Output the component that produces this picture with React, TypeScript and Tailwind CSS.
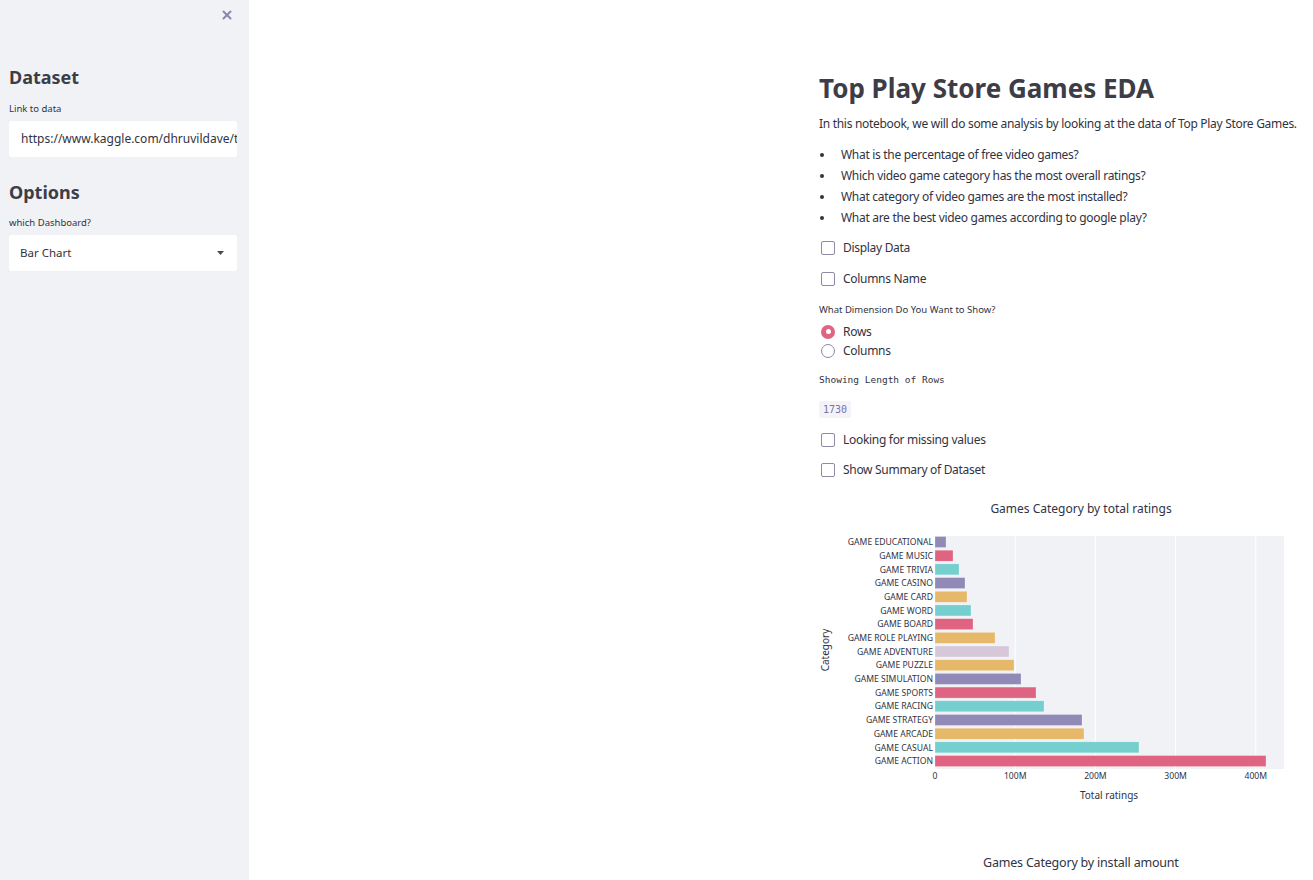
import { X } from "lucide-react";

const font = { fontFamily: '"Noto Sans", "Liberation Sans", sans-serif' };
const mono = { fontFamily: '"DejaVu Sans Mono", "Liberation Mono", monospace' };

const bars = [
  { name: "GAME EDUCATIONAL", len: 11, color: "#918ab7" },
  { name: "GAME MUSIC", len: 18, color: "#df6482" },
  { name: "GAME TRIVIA", len: 24, color: "#75cfcf" },
  { name: "GAME CASINO", len: 30, color: "#918ab7" },
  { name: "GAME CARD", len: 32, color: "#e6b96a" },
  { name: "GAME WORD", len: 36, color: "#75cfcf" },
  { name: "GAME BOARD", len: 38, color: "#df6482" },
  { name: "GAME ROLE PLAYING", len: 60, color: "#e6b96a" },
  { name: "GAME ADVENTURE", len: 74, color: "#d6c7d9" },
  { name: "GAME PUZZLE", len: 79, color: "#e6b96a" },
  { name: "GAME SIMULATION", len: 86, color: "#918ab7" },
  { name: "GAME SPORTS", len: 101, color: "#df6482" },
  { name: "GAME RACING", len: 109, color: "#75cfcf" },
  { name: "GAME STRATEGY", len: 147, color: "#918ab7" },
  { name: "GAME ARCADE", len: 149, color: "#e6b96a" },
  { name: "GAME CASUAL", len: 204, color: "#75cfcf" },
  { name: "GAME ACTION", len: 331, color: "#df6482" },
];

const questions = [
  "What is the percentage of free video games?",
  "Which video game category has the most overall ratings?",
  "What category of video games are the most installed?",
  "What are the best video games according to google play?",
];

function Checkbox({ label }: { label: string }) {
  return (
    <div className="flex items-center h-[20px] gap-[8px] text-[12px] tracking-[-0.3px] text-[#31333f]">
      <span className="ml-[2px] w-[14px] h-[14px] rounded-[2px] border border-[#8e8aa8] bg-white" />
      <span>{label}</span>
    </div>
  );
}

function Radio({ label, checked }: { label: string; checked?: boolean }) {
  return (
    <div className="flex items-center h-[19px] gap-[8px] text-[12px] tracking-[-0.3px] text-[#31333f]">
      {checked ? (
        <span className="ml-[2px] w-[14px] h-[14px] rounded-full bg-[#df6482] flex items-center justify-center">
          <span className="w-[5px] h-[5px] rounded-full bg-white" />
        </span>
      ) : (
        <span className="ml-[2px] w-[14px] h-[14px] rounded-full border border-[#8e8aa8] bg-white" />
      )}
      <span>{label}</span>
    </div>
  );
}

function RatingsChart() {
  const left = 116;
  const top = 46;
  const right = 465;
  const bottom = 279;
  const step = 13.69;
  const scale = 0.802;
  const ticks = [0, 100, 200, 300, 400];
  return (
    <svg width="494" height="320" className="block" style={font}>
      <text x="262" y="23" textAnchor="middle" fontSize="12" fill="#31333f">
        Games Category by total ratings
      </text>
      <rect x={left} y={top} width={right - left} height={bottom - top} fill="#f0f2f6" />
      {ticks.slice(1).map((t) => (
        <line key={t} x1={left + t * scale} x2={left + t * scale} y1={top} y2={bottom} stroke="#ffffff" strokeWidth="1" />
      ))}
      {bars.map((b, i) => {
        const cy = 52 + i * step;
        return (
          <g key={b.name}>
            <text x={left - 2} y={cy + 3.2} textAnchor="end" fontSize="8.6" fill="#31333f">
              {b.name}
            </text>
            <rect x={left} y={cy - 5.5} width={b.len} height="11" fill={b.color} stroke="#ffffff" strokeOpacity="0.5" strokeWidth="0.5" />
          </g>
        );
      })}
      {ticks.map((t) => (
        <text key={t} x={left + t * scale} y="289" textAnchor="middle" fontSize="8.6" fill="#31333f">
          {t === 0 ? "0" : `${t}M`}
        </text>
      ))}
      <text x="290" y="309" textAnchor="middle" fontSize="10" fill="#31333f">
        Total ratings
      </text>
      <text transform="translate(10 160) rotate(-90)" textAnchor="middle" fontSize="10" fill="#31333f">
        Category
      </text>
    </svg>
  );
}

export default function App() {
  return (
    <div className="flex h-[880px] w-[1313px] overflow-hidden bg-white" style={font}>
      <aside className="w-[249px] shrink-0 bg-[#f0f2f6] pl-[9px] pr-[12px]">
        <div className="flex justify-end pt-[8px] pr-[3px]">
          <X size={14} strokeWidth={3.5} className="text-[#8f86b0]" />
        </div>
        <h2 className="mt-[43px] text-[18px] font-bold leading-[24px] text-[#3d3d48]">Dataset</h2>
        <div className="mt-[14px] text-[9.5px] leading-[12px] text-[#31333f]">Link to data</div>
        <div className="mt-[6px] h-[36px] bg-white rounded-[2px] flex items-center pl-[12px] overflow-hidden whitespace-nowrap text-[12px] text-[#31333f]">
          https://www.kaggle.com/dhruvildave/t
        </div>
        <h2 className="mt-[23px] text-[18px] font-bold leading-[24px] text-[#3d3d48]">Options</h2>
        <div className="mt-[13px] text-[9.5px] leading-[12px] text-[#31333f]">which Dashboard?</div>
        <div className="mt-[6px] h-[36px] bg-white rounded-[2px] flex items-center justify-between pl-[11px] pr-[13px] text-[11.5px] text-[#31333f]">
          <span>Bar Chart</span>
          <svg width="7" height="4" viewBox="0 0 7 4">
            <path d="M0 0h7L3.5 4z" fill="#4a4a5a" />
          </svg>
        </div>
      </aside>
      <main className="flex-1 pl-[570px] pt-[71px] text-[#31333f]">
        <div className="w-[494px]">
          <h1 className="text-[26px] font-bold leading-[34px] text-[#3d3d48] whitespace-nowrap">
            Top Play Store Games EDA
          </h1>
          <p className="mt-[10px] text-[12px] leading-[18px] whitespace-nowrap tracking-[-0.3px]">
            In this notebook, we will do some analysis by looking at the data of Top Play Store Games.
          </p>
          <ul className="mt-[11px] text-[12px] leading-[21px] tracking-[-0.3px]">
            {questions.map((q) => (
              <li key={q} className="flex items-center">
                <span className="w-[22px] pl-[1px] flex items-center">
                  <span className="w-[4px] h-[4px] rounded-full bg-[#31333f]" />
                </span>
                <span>{q}</span>
              </li>
            ))}
          </ul>
          <div className="mt-[10px] flex flex-col gap-[11px]">
            <Checkbox label="Display Data" />
            <Checkbox label="Columns Name" />
          </div>
          <div className="mt-[15px] text-[9.5px] leading-[12px]">What Dimension Do You Want to Show?</div>
          <div className="mt-[6px]">
            <Radio label="Rows" checked />
            <Radio label="Columns" />
          </div>
          <div className="mt-[14px] text-[9.5px] leading-[12px]" style={mono}>
            Showing Length of Rows
          </div>
          <div className="mt-[9px]">
            <span className="inline-block bg-[#f4f4f8] px-[4px] py-[1px] rounded-[2px] text-[10px] text-[#7b70a8]" style={mono}>
              1730
            </span>
          </div>
          <div className="mt-[11px] flex flex-col gap-[10px]">
            <Checkbox label="Looking for missing values" />
            <Checkbox label="Show Summary of Dataset" />
          </div>
          <div className="mt-[10px]">
            <RatingsChart />
          </div>
          <div className="mt-[44px] pl-[164px] text-[12.5px] whitespace-nowrap tracking-[-0.2px]">
            Games Category by install amount
          </div>
        </div>
      </main>
    </div>
  );
}
